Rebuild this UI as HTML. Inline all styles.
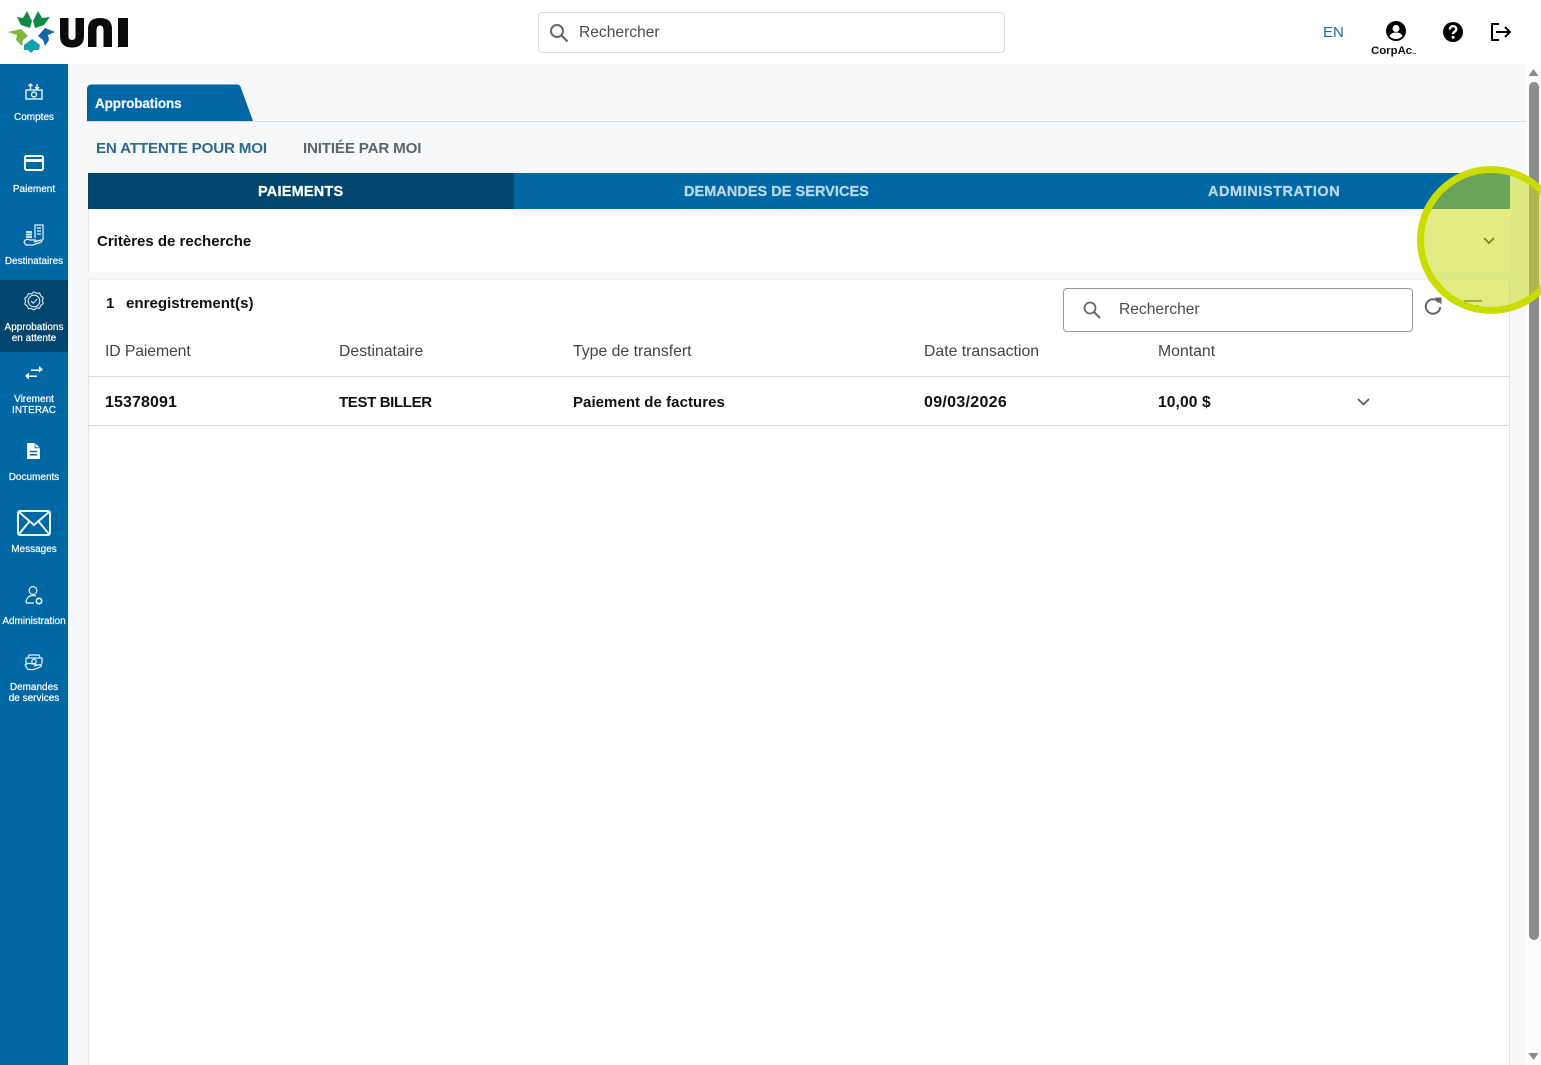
<!DOCTYPE html>
<html lang="fr"><head><meta charset="utf-8"><title>Approbations</title>
<style>
*{box-sizing:border-box}
html,body{margin:0;padding:0;width:1541px;height:1065px;overflow:hidden;background:#f6f8fa;font-family:"Liberation Sans",sans-serif}
.a{position:absolute;white-space:nowrap}
.side{position:absolute;left:0;top:64px;width:68px;height:1001px;background:#0067a5}
.lab{position:absolute;left:0;width:68px;text-align:center;color:#fff;font-size:10px;line-height:10.500px;white-space:nowrap;-webkit-text-stroke:.2px #fff;margin-top:1px}
.ic{position:absolute;overflow:visible}
.th{position:absolute;top:343px;font-size:15.800px;line-height:18px;color:#444;white-space:nowrap}
.td{position:absolute;top:394px;font-size:15px;line-height:18px;font-weight:bold;color:#111;white-space:nowrap}
.bd{font-weight:bold;-webkit-text-stroke:.25px currentColor}
</style></head><body>

<div class="a" style="left:0;top:0;width:1541px;height:64px;background:#fff"></div>
<svg class="ic" style="left:0;top:0" width="135" height="60" viewBox="0 0 135 60">
<path d="M27 11L32 21L30 28L21 25L17 17L23 18Z" fill="#0e8a46"/>
<path d="M38 11L33 21L35 28L44 25L50 17L42 18Z" fill="#0e8a46"/>
<path d="M8 32L21 29L28 36L23 40L22 46L16 40L17 35Z" fill="#7cb93b"/>
<path d="M55 32L45 28L38 36L43 40L45 46L49 40L48 35Z" fill="#1467a8"/>
<path d="M32 39L40 45L39 50L34 50L31 53L28 50L24 50L24 45Z" fill="#14a0ad"/>
<path d="M60 18H68.500V36Q68.500 40 72 40Q75.500 40 75.500 36V18H84V36Q84 47.500 72 47.500Q60 47.500 60 36Z" fill="#0c0c0c"/>
<path d="M88 47V29Q88 18 100 18Q112 18 112 29V47H103.500V30Q103.500 25.500 100 25.500Q96.500 25.500 96.500 30V47Z" fill="#0c0c0c"/>
<rect x="118" y="18" width="10" height="29" fill="#0c0c0c"/>
</svg>

<div class="a" style="left:538px;top:12px;width:467px;height:41px;background:#fff;border:1px solid #dcdcdc;border-radius:4px"></div>
<svg class="ic" style="left:549px;top:23px" width="20" height="20" viewBox="0 0 20 20"><circle cx="8" cy="8" r="6" fill="none" stroke="#666" stroke-width="2"/><path d="M12.500 12.500L18.500 18.500" stroke="#666" stroke-width="2.200"/></svg>
<div class="a" style="left:579px;top:23px;font-size:15.600px;line-height:19px;color:#4a4a4a">Rechercher</div>

<div class="a" style="left:1323px;top:24px;font-size:15px;line-height:18px;color:#1c6a98">EN</div>
<svg class="ic" style="left:1386px;top:21px" width="20" height="20" viewBox="0 0 20 20"><circle cx="10" cy="10" r="10" fill="#000"/><circle cx="10" cy="7.500" r="3.500" fill="#fff"/><path d="M3.500 15c1.500-3 4-3.500 6.500-3.500s5 .5 6.500 3.500c-1.500 2-4 3-6.500 3s-5-1-6.500-3z" fill="#fff"/></svg>
<div class="a" style="left:1371px;top:44px;font-size:11.400px;line-height:14px;font-weight:bold;color:#111">CorpAc<span style="font-size:7px">..</span></div>
<svg class="ic" style="left:1443px;top:22px" width="20" height="20" viewBox="0 0 20 20"><circle cx="10" cy="10" r="10" fill="#000"/><path d="M6.800 7.500c0-2 1.500-3.300 3.300-3.300s3.200 1.200 3.200 2.900c0 2.300-3.200 2.500-3.200 5" fill="none" stroke="#fff" stroke-width="2.400"/><rect x="8.800" y="14" width="2.600" height="2.600" fill="#fff"/></svg>
<svg class="ic" style="left:1491px;top:23px" width="20" height="18" viewBox="0 0 20 18"><path d="M8 1H1v16h7" fill="none" stroke="#000" stroke-width="2"/><path d="M5 9h14M14 4l5 5-5 5" fill="none" stroke="#000" stroke-width="2"/></svg>

<div class="side"></div>
<div class="a" style="left:0;top:280px;width:68px;height:72px;background:#00466c"></div>

<svg class="ic" style="left:25px;top:83px" width="18" height="17" viewBox="0 0 18 17" fill="none" stroke="#eaf4fa" stroke-width="1.400"><path d="M5.500 6V1M3.500 3l2-2 2 2M12 1v5M10 4l2 2 2-2"/><rect x="1" y="7" width="16" height="9"/><circle cx="9" cy="11.500" r="2.500"/></svg>
<div class="lab" style="top:112px">Comptes</div>
<svg class="ic" style="left:24px;top:155px" width="20" height="16" viewBox="0 0 20 16"><rect x="1" y="1" width="18" height="14" rx="1.500" fill="none" stroke="#fff" stroke-width="2"/><rect x="1" y="4" width="18" height="3" fill="#fff"/></svg>
<div class="lab" style="top:184px">Paiement</div>
<svg class="ic" style="left:23px;top:224px" width="22" height="22" viewBox="0 0 22 22" fill="none" stroke="#eaf4fa" stroke-width="1.200"><path d="M12 14V1h8v15M14 4h4M14 7h4M14 10h4"/><path d="M3 8h6M3 10.500h6M3 13h6" stroke-width="1.800"/><path d="M1 18c1-3 4-3 6-2h5c2 0 1 2-1 2l7-2c2 0 1 2-1 2.500L10 21H3z"/></svg>
<div class="lab" style="top:256px">Destinataires</div>
<svg class="ic" style="left:24px;top:291px" width="20" height="20" viewBox="0 0 20 20" fill="none" stroke="#dcebf5" stroke-width="1.100"><path d="M10 .8l2.600 1.500 3-.2 1.200 2.700 2.400 1.900-.8 2.900.8 2.900-2.400 1.900-1.200 2.700-3-.2L10 19l-2.600-1.500-3 .2-1.200-2.700L.8 13.100l.8-2.900-.8-2.900 2.400-1.900 1.200-2.700 3 .2z"/><circle cx="10" cy="10" r="5.800"/><path d="M7 10l2.200 2.200L13.200 8"/></svg>
<div class="lab" style="top:322px">Approbations<br>en attente</div>
<svg class="ic" style="left:25px;top:366px" width="18" height="14" viewBox="0 0 18 14"><path d="M6 3.500h8V0l4 3.500L14 6.500V5H6z M12 9.500H4V6.500L0 10l4 3.500V11h8z" fill="#fff"/></svg>
<div class="lab" style="top:394px">Virement<br>INTERAC</div>
<svg class="ic" style="left:27px;top:443px" width="13" height="16" viewBox="0 0 12 15"><path d="M0 0h7.500L12 4.500V15H0z" fill="#fff"/><path d="M2.500 8h7M2.500 11h7" stroke="#0067a5" stroke-width="1.400"/><path d="M7.500 0v4.500H12" fill="none" stroke="#0067a5" stroke-width=".8"/></svg>
<div class="lab" style="top:472px">Documents</div>
<svg class="ic" style="left:17px;top:510px" width="34" height="26" viewBox="0 0 34 26" fill="none" stroke="#eaf4fa" stroke-width="2"><rect x="1" y="1" width="32" height="24" rx="2"/><path d="M2 2l15 13L32 2M2 24l10-12M32 24L22 12"/></svg>
<div class="lab" style="top:544px">Messages</div>
<svg class="ic" style="left:25px;top:586px" width="18" height="19" viewBox="0 0 18 19" fill="none" stroke="#eaf4fa" stroke-width="1.200"><circle cx="8" cy="4.500" r="3.900"/><path d="M1 17c0-5 3-7.500 7-7.500 1 0 2 .2 3 .7M1 17h8"/><circle cx="14" cy="15" r="2.700" stroke-width="1.600"/></svg>
<div class="lab" style="top:616px">Administration</div>
<svg class="ic" style="left:24px;top:654px" width="20" height="16" viewBox="0 0 20 16" fill="none" stroke="#eaf4fa" stroke-width="1.200"><path d="M4 3l1-2h10l1 2M2 10V4h16v6"/><circle cx="10" cy="7.500" r="2.200"/><path d="M1 11c2-2 5-2 7-1h3c2 0 1 2-1 2l6-1.500c2 0 2 1.500 0 2.500l-6 2.500H4z"/></svg>
<div class="lab" style="top:682px">Demandes<br>de services</div>

<svg class="ic" style="left:87px;top:84px" width="166" height="38" viewBox="0 0 166 38"><path d="M0 37V5Q0 .5 5 .5H150Q153 .5 154 4L166 37z" fill="#0067a5"/></svg>
<div class="a bd" style="left:95px;top:95px;font-size:13.500px;line-height:17px;color:#eef6fb;letter-spacing:-.1px">Approbations</div>
<div class="a" style="left:87px;top:121px;width:1439px;height:1px;background:#d9dcdf"></div>

<div class="a" style="left:96px;top:140px;font-size:15.200px;line-height:18px;font-weight:bold;color:#2d6a8e;letter-spacing:-.2px">EN ATTENTE POUR MOI</div>
<div class="a" style="left:303px;top:140px;font-size:15.200px;line-height:18px;font-weight:bold;color:#5f6468;letter-spacing:-.2px">INITIÉE PAR MOI</div>

<div class="a" style="left:88px;top:173px;width:1422px;height:36px;background:#0067a5"></div>
<div class="a" style="left:88px;top:173px;width:426px;height:36px;background:#00466c"></div>
<div class="a bd" style="left:258px;top:183px;font-size:14.500px;line-height:18px;color:#fff;letter-spacing:.2px">PAIEMENTS</div>
<div class="a bd" style="left:684px;top:183px;font-size:14.500px;line-height:18px;color:#bcd9ea;letter-spacing:.03px">DEMANDES DE SERVICES</div>
<div class="a bd" style="left:1208px;top:183px;font-size:14.500px;line-height:18px;color:#bcd9ea;letter-spacing:.55px">ADMINISTRATION</div>

<div class="a" style="left:88px;top:209px;width:1422px;height:63px;background:#fff;border-left:1px solid #e4e6e8"></div>
<div class="a" style="left:97px;top:233px;font-size:15px;line-height:18px;font-weight:bold;color:#111">Critères de recherche</div>
<svg class="ic" style="left:1483px;top:237px" width="12" height="8" viewBox="0 0 12 8"><path d="M1 1l5 5 5-5" fill="none" stroke="#222" stroke-width="1.700"/></svg>

<div class="a" style="left:88px;top:279px;width:1422px;height:786px;background:#fff;border:1px solid #e2e4e6;border-bottom:0;border-top-color:#eef0f1;border-radius:4px 4px 0 0"></div>
<div class="a" style="left:106px;top:295px;font-size:15px;line-height:18px;font-weight:bold;color:#111">1</div>
<div class="a" style="left:126px;top:295px;font-size:15.100px;line-height:18px;font-weight:bold;color:#111">enregistrement(s)</div>

<div class="a" style="left:1063px;top:288px;width:350px;height:44px;background:#fff;border:1px solid #9a9a9a;border-radius:4px"></div>
<svg class="ic" style="left:1083px;top:301px" width="18" height="18" viewBox="0 0 18 18"><circle cx="7" cy="7" r="5.500" fill="none" stroke="#666" stroke-width="1.800"/><path d="M11 11l6 6" stroke="#666" stroke-width="2"/></svg>
<div class="a" style="left:1119px;top:300px;font-size:15.600px;line-height:19px;color:#4a4a4a">Rechercher</div>
<svg class="ic" style="left:1424px;top:297px" width="18" height="18" viewBox="0 0 18 18"><path d="M15 5.500A7.200 7.200 0 1 0 16.200 10" fill="none" stroke="#666" stroke-width="2"/><path d="M10.500 .5h7v7z" fill="#666"/></svg>
<div class="a" style="left:1464px;top:300px;width:18px;height:2px;background:#7a7a7a"></div>
<div class="a" style="left:1467px;top:305px;width:12px;height:2px;background:#7a7a7a"></div>

<div class="th" style="left:105px;letter-spacing:-.12px">ID Paiement</div>
<div class="th" style="left:339px">Destinataire</div>
<div class="th" style="left:573px">Type de transfert</div>
<div class="th" style="left:924px">Date transaction</div>
<div class="th" style="left:1158px">Montant</div>
<div class="a" style="left:89px;top:376px;width:1420px;height:1px;background:#dedede"></div>
<div class="td" style="left:105px;font-size:16px;letter-spacing:.1px">15378091</div>
<div class="td" style="left:339px;letter-spacing:-.36px">TEST BILLER</div>
<div class="td" style="left:573px;letter-spacing:.05px">Paiement de factures</div>
<div class="td" style="left:924px;font-size:16px;letter-spacing:.3px">09/03/2026</div>
<div class="td" style="left:1158px;font-size:15.600px;letter-spacing:.1px">10,00 $</div>
<svg class="ic" style="left:1357px;top:398px" width="13" height="8" viewBox="0 0 13 8"><path d="M1 1l5.500 5.500L12 1" fill="none" stroke="#555" stroke-width="1.600"/></svg>
<div class="a" style="left:89px;top:425px;width:1420px;height:1px;background:#dedede"></div>

<div class="a" style="left:1526px;top:64px;width:15px;height:1001px;background:#fbfbfc"></div>
<div class="a" style="left:1529px;top:82px;width:10px;height:858px;background:#8c8c8c;border-radius:5px"></div>
<svg class="ic" style="left:1528px;top:69px" width="11" height="8" viewBox="0 0 11 8"><path d="M5.500 0L10.500 7H.5z" fill="#8c8c8c"/></svg>
<svg class="ic" style="left:1528px;top:1053px" width="11" height="8" viewBox="0 0 11 8"><path d="M.5 0h10L5.500 7z" fill="#8c8c8c"/></svg>

<div class="a" style="left:1417px;top:166px;width:148px;height:148px;border-radius:50%;background:rgba(203,220,20,.53);border:7px solid #cbdc00"></div>
</body></html>
